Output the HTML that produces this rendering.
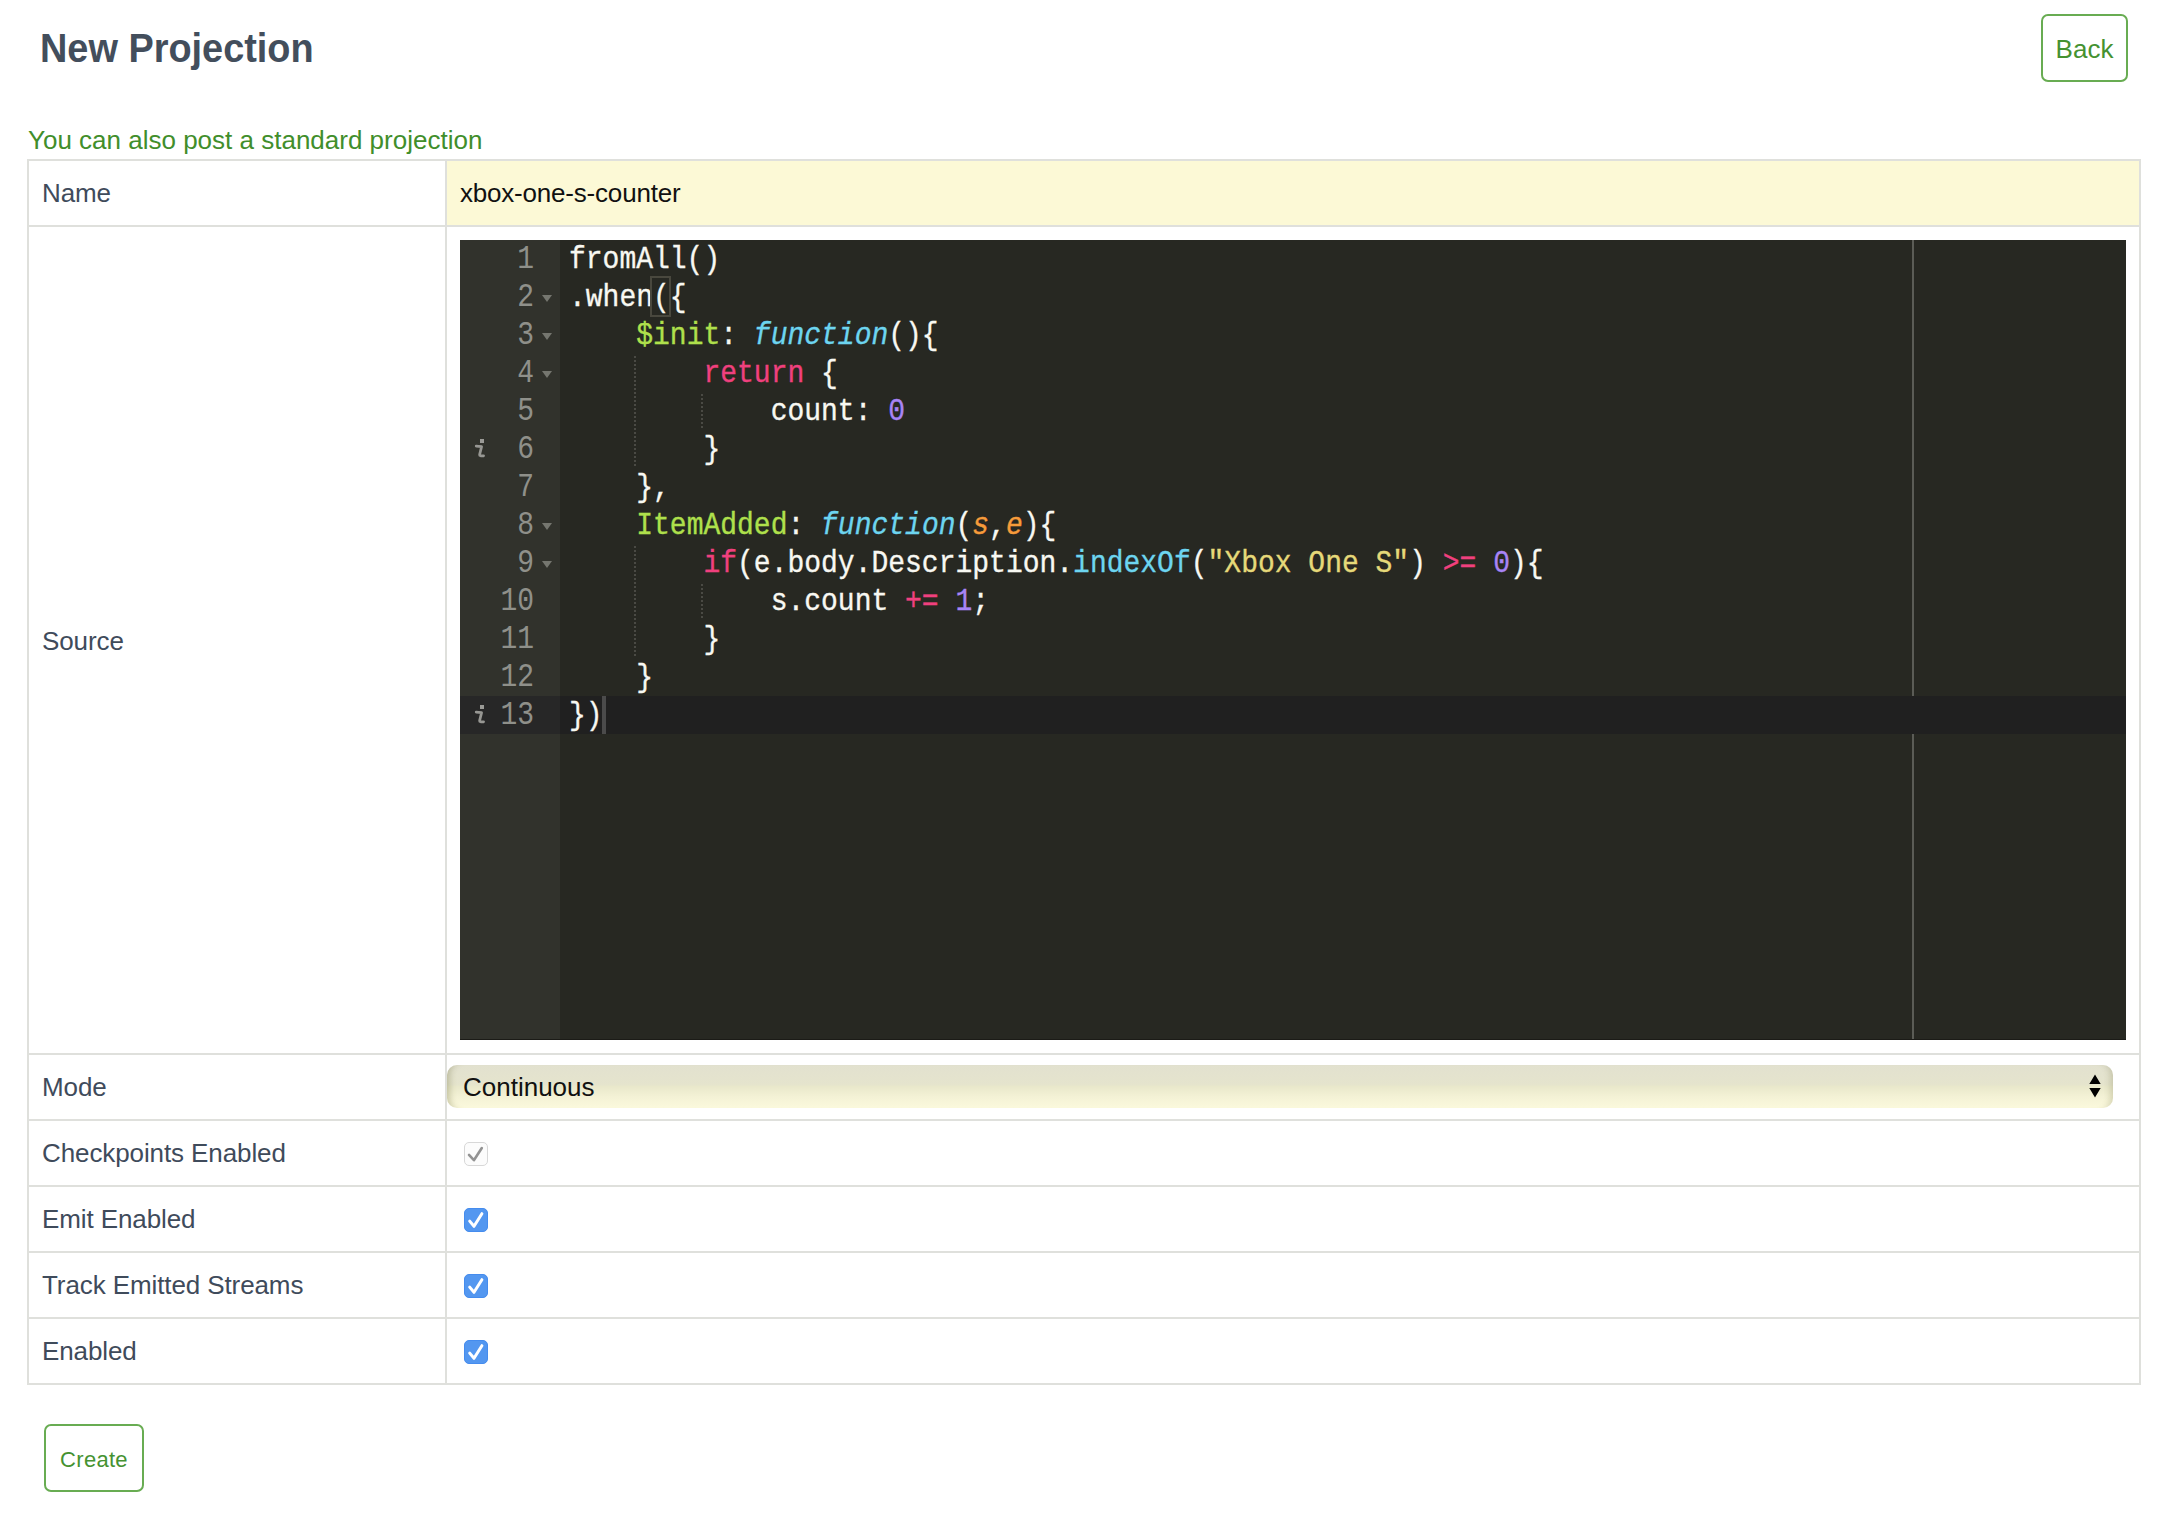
<!DOCTYPE html>
<html><head><meta charset="utf-8">
<style>
html,body{margin:0;padding:0;background:#fff;width:2166px;height:1513px;overflow:hidden;position:relative;}
body{font-family:"Liberation Sans",sans-serif;}
.abs{position:absolute;white-space:nowrap;}
h1{position:absolute;margin:0;left:40px;top:22px;font-size:40px;line-height:52px;font-weight:bold;color:#434e5c;transform:scaleX(0.947);transform-origin:0 0;white-space:nowrap;}
.btn{position:absolute;box-sizing:border-box;border:2px solid #68ac52;border-radius:7px;color:#459231;background:#fff;text-align:center;}
#back{left:2041px;top:14px;width:87px;height:68px;font-size:26px;line-height:66px;}
#create{left:44px;top:1424px;width:100px;height:68px;font-size:22px;line-height:67px;letter-spacing:0.3px;}
#link{left:28px;top:125px;font-size:26px;line-height:30px;color:#418e2b;}
.hl{position:absolute;background:#dfe0dc;}
.lbl{position:absolute;left:42px;font-size:26px;line-height:30px;color:#3f4b5b;letter-spacing:-0.1px;}
#namefield{position:absolute;left:447px;top:161px;width:1692px;height:64px;background:#fcf9d6;}
#nametext{left:460px;top:178px;font-size:26px;line-height:30px;color:#111;letter-spacing:-0.2px;}
#editor{position:absolute;left:460px;top:240px;width:1666px;height:800px;background:#272822;overflow:hidden;box-shadow:inset 0 -1px 0 #1b1b17;}
#gutter{position:absolute;left:0;top:0;width:100px;height:800px;background:#31322c;}
#pm{position:absolute;left:1452px;top:0;width:2px;height:800px;background:#5b5c56;}
.ln{position:absolute;left:0;width:100%;height:38px;}
.code{position:absolute;left:109px;top:2px;transform:scaleY(1.12);transform-origin:0 26.5px;font-family:"Liberation Mono",monospace;font-size:28px;line-height:38px;color:#f8f8f2;white-space:pre;-webkit-text-stroke:0.3px currentColor;}
.num{position:absolute;left:0;top:2px;transform:scaleY(1.17);transform-origin:0 26.5px;width:74px;text-align:right;font-family:"Liberation Mono",monospace;font-size:28px;line-height:38px;color:#8f908a;}
.k{color:#f0407e}.f{color:#6dd5f0;font-style:italic}.e{color:#afe04c}.p{color:#f79b3a;font-style:italic}.n{color:#a884f6}.s{color:#e6d979}.c{color:#6dd5f0}
#select{position:absolute;left:447px;top:1065px;width:1666px;height:43px;border-radius:10px;background:linear-gradient(#e2e1cf 0,#e5e4cd 45%,#e9e8cb 50%,#f4f2d6 75%,#fbf9dc 100%);box-shadow:inset 9px 0 6px -6px rgba(90,90,40,.28), inset -9px 0 6px -6px rgba(90,90,40,.2);}
#seltext{left:463px;top:1072px;font-size:26px;line-height:30px;color:#111;}
.cb{position:absolute;left:464px;width:24px;height:24px;border-radius:5px;box-sizing:border-box;}
.cb.on{background:#5397f0;border:1px solid #458cee;}
.cb.dis{background:#fcfcfc;border:1px solid #d8d8d8;}

.guide{position:absolute;width:2px;background:repeating-linear-gradient(to bottom,#4a4a44 0 2px,transparent 2px 4px);}
.fold{position:absolute;left:82px;width:0;height:0;border-left:5px solid transparent;border-right:5px solid transparent;border-top:7px solid #75766f;}
.info{position:absolute;left:12px;width:20px;height:38px;}
#bracket{position:absolute;left:190px;top:36px;width:17px;height:37px;border:2px solid #49483e;}
#cursor{position:absolute;left:142px;top:456px;width:4px;height:38px;background:#4b4b4b;}
</style></head><body>
<h1>New Projection</h1>
<div id="back" class="btn">Back</div>
<div id="link" class="abs">You can also post a standard projection</div>

<!-- table -->
<div id="namefield"></div>
<div class="hl" style="left:27px;top:159px;width:2114px;height:2px"></div>
<div class="hl" style="left:27px;top:1383px;width:2114px;height:2px"></div>
<div class="hl" style="left:27px;top:159px;width:2px;height:1226px"></div>
<div class="hl" style="left:2139px;top:159px;width:2px;height:1226px"></div>
<div class="hl" style="left:445px;top:159px;width:2px;height:1226px"></div>
<div class="hl" style="left:27px;top:225px;width:2114px;height:2px"></div>
<div class="hl" style="left:27px;top:1053px;width:2114px;height:2px"></div>
<div class="hl" style="left:27px;top:1119px;width:2114px;height:2px"></div>
<div class="hl" style="left:27px;top:1185px;width:2114px;height:2px"></div>
<div class="hl" style="left:27px;top:1251px;width:2114px;height:2px"></div>
<div class="hl" style="left:27px;top:1317px;width:2114px;height:2px"></div>

<div class="lbl" style="top:178px">Name</div>
<div class="lbl" style="top:626px">Source</div>
<div class="lbl" style="top:1072px">Mode</div>
<div class="lbl" style="top:1138px">Checkpoints Enabled</div>
<div class="lbl" style="top:1204px">Emit Enabled</div>
<div class="lbl" style="top:1270px">Track Emitted Streams</div>
<div class="lbl" style="top:1336px">Enabled</div>

<div id="nametext" class="abs">xbox-one-s-counter</div>

<div id="editor">
  <div id="gutter"></div>
  <div id="pm"></div>
  <div class="ln" style="top:0"><div class="num">1</div><div class="code">fromAll()</div></div>
  <div class="ln" style="top:38px"><div class="num">2</div><div class="code">.when({</div></div>
  <div class="ln" style="top:76px"><div class="num">3</div><div class="code">    <span class="e">$init</span>: <span class="f">function</span>(){</div></div>
  <div class="ln" style="top:114px"><div class="num">4</div><div class="code">        <span class="k">return</span> {</div></div>
  <div class="ln" style="top:152px"><div class="num">5</div><div class="code">            count: <span class="n">0</span></div></div>
  <div class="ln" style="top:190px"><div class="num">6</div><div class="code">        }</div></div>
  <div class="ln" style="top:228px"><div class="num">7</div><div class="code">    },</div></div>
  <div class="ln" style="top:266px"><div class="num">8</div><div class="code">    <span class="e">ItemAdded</span>: <span class="f">function</span>(<span class="p">s</span>,<span class="p">e</span>){</div></div>
  <div class="ln" style="top:304px"><div class="num">9</div><div class="code">        <span class="k">if</span>(e.body.Description.<span class="c">indexOf</span>(<span class="s">"Xbox One S"</span>) <span class="k">&gt;=</span> <span class="n">0</span>){</div></div>
  <div class="ln" style="top:342px"><div class="num">10</div><div class="code">            s.count <span class="k">+=</span> <span class="n">1</span>;</div></div>
  <div class="ln" style="top:380px"><div class="num">11</div><div class="code">        }</div></div>
  <div class="ln" style="top:418px"><div class="num">12</div><div class="code">    }</div></div>
  <div class="ln" style="top:456px;background:#202020"><div style="position:absolute;left:0;top:0;width:100px;height:38px;background:#272727"></div><div class="num">13</div><div class="code">})</div></div>
  <div class="guide" style="left:174px;top:116px;height:112px"></div>
  <div class="guide" style="left:241px;top:154px;height:36px"></div>
  <div class="guide" style="left:174px;top:306px;height:112px"></div>
  <div class="guide" style="left:241px;top:344px;height:36px"></div>
  <div class="fold" style="top:55px"></div>
  <div class="fold" style="top:93px"></div>
  <div class="fold" style="top:131px"></div>
  <div class="fold" style="top:283px"></div>
  <div class="fold" style="top:321px"></div>
  <div class="info" style="top:190px"><svg width="20" height="38" viewBox="0 0 20 38"><rect x="8" y="9" width="4" height="4" fill="#9a9a96"/><path d="M4.2 16.2 L9.6 16.6 L7.6 24.6 Q7.4 26.4 11.6 25.8" fill="none" stroke="#979793" stroke-width="2.7" stroke-linejoin="round" stroke-linecap="round"/></svg></div>
  <div class="info" style="top:456px"><svg width="20" height="38" viewBox="0 0 20 38"><rect x="8" y="9" width="4" height="4" fill="#9a9a96"/><path d="M4.2 16.2 L9.6 16.6 L7.6 24.6 Q7.4 26.4 11.6 25.8" fill="none" stroke="#979793" stroke-width="2.7" stroke-linejoin="round" stroke-linecap="round"/></svg></div>
  <div id="bracket"></div>
  <div id="cursor"></div>
  <div style="position:absolute;left:0;top:799px;width:1666px;height:1px;background:#1b1b17"></div>
</div>


<div id="select"></div>
<div id="seltext" class="abs">Continuous</div>
<svg width="14" height="26" viewBox="0 0 14 26" style="position:absolute;left:2088px;top:1073px"><path d="M1.3 11 L7 1.5 L12.7 11 Z M1.3 15 L7 24.5 L12.7 15 Z" fill="#000"/></svg>

<div class="cb dis" style="top:1142px"><svg width="24" height="24" viewBox="0 0 24 24" style="position:absolute;left:-1px;top:-1px"><path d="M5.0 12.9 L9.9 18.2 L17.8 6.0" fill="none" stroke="#939393" stroke-width="2.6" stroke-linecap="round" stroke-linejoin="round"/></svg></div>
<div class="cb on" style="top:1208px"><svg width="24" height="24" viewBox="0 0 24 24" style="position:absolute;left:-1px;top:-1px"><path d="M5.7 13.1 L10 18.3 L17.9 5.7" fill="none" stroke="#fff" stroke-width="3" stroke-linecap="round" stroke-linejoin="round"/></svg></div>
<div class="cb on" style="top:1274px"><svg width="24" height="24" viewBox="0 0 24 24" style="position:absolute;left:-1px;top:-1px"><path d="M5.7 13.1 L10 18.3 L17.9 5.7" fill="none" stroke="#fff" stroke-width="3" stroke-linecap="round" stroke-linejoin="round"/></svg></div>
<div class="cb on" style="top:1340px"><svg width="24" height="24" viewBox="0 0 24 24" style="position:absolute;left:-1px;top:-1px"><path d="M5.7 13.1 L10 18.3 L17.9 5.7" fill="none" stroke="#fff" stroke-width="3" stroke-linecap="round" stroke-linejoin="round"/></svg></div>

<div id="create" class="btn">Create</div>
</body></html>
